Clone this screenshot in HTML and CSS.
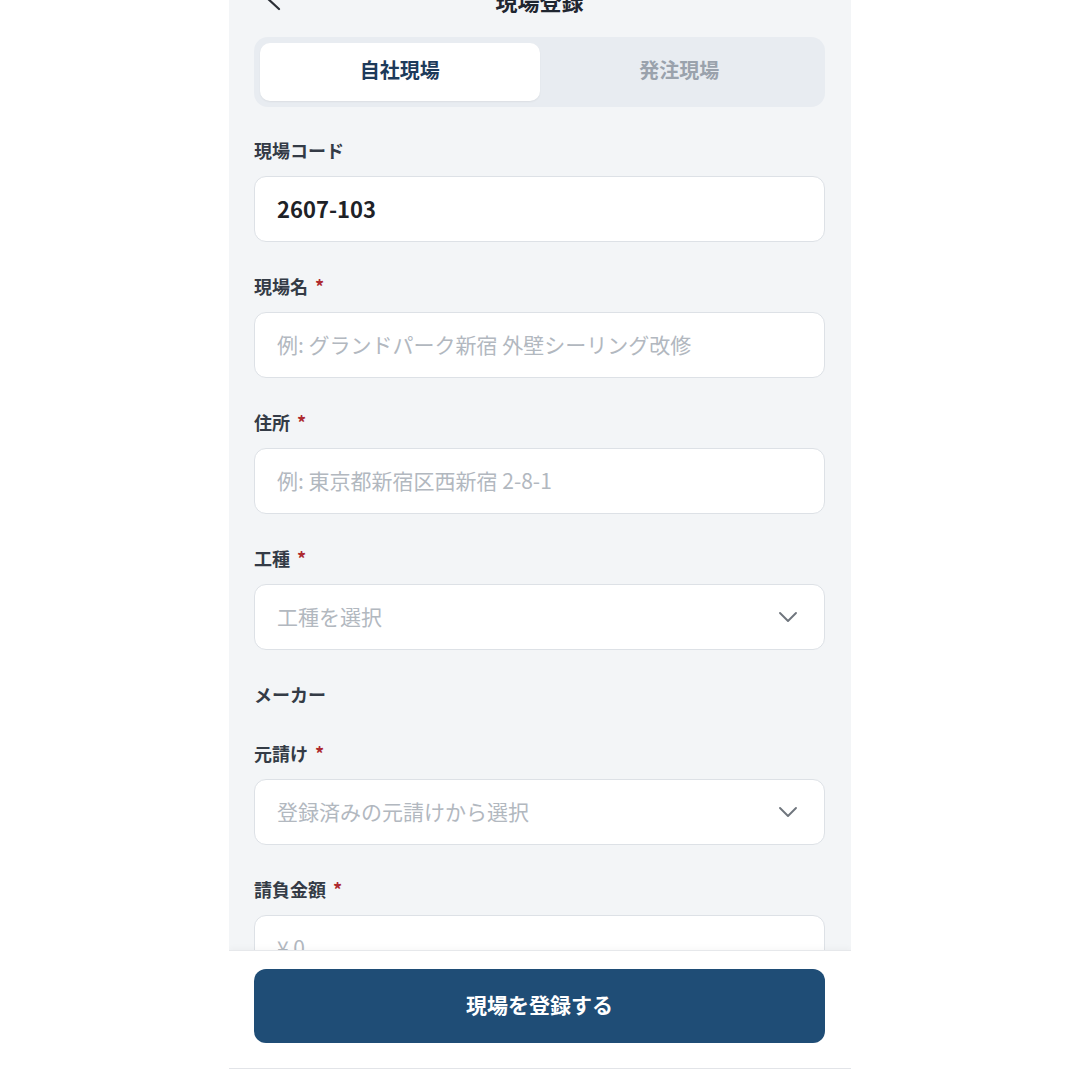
FILE: index.html
```html
<!DOCTYPE html>
<html lang="ja">
<head>
<meta charset="utf-8">
<title>現場登録</title>
<link rel="stylesheet" href="styles.css">
</head>
<body>
<div class="phone">
  <main class="content">
    <header class="header">
      <svg class="back" viewBox="0 0 24 28" width="24" height="28"><polyline points="17,1 4,13 17,25" fill="none" stroke="#2b2f36" stroke-width="2.2" stroke-linecap="round" stroke-linejoin="round"/></svg>
      <h1 class="title">現場登録</h1>
      <span class="spacer"></span>
    </header>

    <div class="segment">
      <div class="tab tab-active">自社現場</div>
      <div class="tab">発注現場</div>
    </div>

    <div class="field">
      <div class="label">現場コード</div>
      <div class="control value">2607-103</div>
    </div>

    <div class="field">
      <div class="label">現場名<span class="req">*</span></div>
      <div class="control placeholder">例: グランドパーク新宿 外壁シーリング改修</div>
    </div>

    <div class="field">
      <div class="label">住所<span class="req">*</span></div>
      <div class="control placeholder">例: 東京都新宿区西新宿 2-8-1</div>
    </div>

    <div class="field">
      <div class="label">工種<span class="req">*</span></div>
      <div class="control placeholder select">
        <span>工種を選択</span>
        <svg class="chev" viewBox="0 0 20 12" width="20" height="12"><polyline points="2,2 10,10 18,2" fill="none" stroke="#6f757d" stroke-width="1.9" stroke-linecap="round" stroke-linejoin="round"/></svg>
      </div>
    </div>

    <div class="field field-empty">
      <div class="label">メーカー</div>
    </div>

    <div class="field">
      <div class="label">元請け<span class="req">*</span></div>
      <div class="control placeholder select">
        <span>登録済みの元請けから選択</span>
        <svg class="chev" viewBox="0 0 20 12" width="20" height="12"><polyline points="2,2 10,10 18,2" fill="none" stroke="#6f757d" stroke-width="1.9" stroke-linecap="round" stroke-linejoin="round"/></svg>
      </div>
    </div>

    <div class="field">
      <div class="label">請負金額<span class="req">*</span></div>
      <div class="control placeholder">¥ 0</div>
    </div>
  </main>

  <footer class="bar">
    <button class="submit">現場を登録する</button>
  </footer>
</div>
</body>
</html>
```

FILE: styles.css
```css
* { box-sizing: border-box; }

html, body {
  margin: 0;
  padding: 0;
  background: #ffffff;
  font-family: "Noto Sans CJK JP", "Noto Sans", sans-serif;
}

.phone {
  width: 622px;
  height: 1069px;
  margin: 0 0 0 229px;
  background: #f3f5f7;
  display: flex;
  flex-direction: column;
  border-bottom: 1px solid #e2e4e8;
  overflow: hidden;
}

.content {
  flex: 1;
  overflow: hidden;
  padding: 0 26px 0 25px;
}

.header {
  display: grid;
  grid-template-columns: 40px 1fr 40px;
  align-items: start;
  height: 22px;
  margin-top: -11px;
  margin-bottom: 26px;
}

.back {
  margin-top: -5px;
  margin-left: 8px;
}

.title {
  margin: 0;
  text-align: center;
  font-size: 22px;
  line-height: 22px;
  font-weight: 700;
  color: #1f2630;
}

.segment {
  display: flex;
  background: #e8ecf1;
  border-radius: 14px;
  padding: 6px;
  height: 70px;
  margin-bottom: 31px;
}

.tab {
  flex: 1;
  display: flex;
  align-items: center;
  justify-content: center;
  border-radius: 10px;
  font-size: 20px;
  font-weight: 700;
  color: #9aa2ac;
  padding-bottom: 5px;
}

.tab-active {
  background: #ffffff;
  color: #1d3a5a;
  box-shadow: 0 1px 2px rgba(0, 0, 0, 0.06);
}

.field {
  margin-bottom: 32px;
}

.field-empty {
  margin-bottom: 35px;
}

.label {
  font-size: 18px;
  line-height: 24px;
  font-weight: 700;
  color: #343b46;
  margin-bottom: 14px;
}

.field-empty .label {
  margin-bottom: 0;
}

.req {
  color: #ad2a2f;
  margin-left: 7px;
}

.control {
  height: 66px;
  background: #ffffff;
  border: 1px solid #dde1e6;
  border-radius: 12px;
  padding: 0 22px 2px;
  display: flex;
  align-items: center;
  font-size: 21px;
}

.value {
  color: #1e2227;
  font-weight: 600;
  font-size: 22px;
}

.placeholder {
  color: #b2b8bf;
  font-weight: 400;
}

.select {
  justify-content: space-between;
  padding-right: 26px;
}

.chev {
  display: block;
  margin-top: 1px;
}

.bar {
  height: 118px;
  flex: none;
  background: #ffffff;
  border-top: 1px solid #e6e8eb;
  box-shadow: 0 -2px 6px rgba(0, 0, 0, 0.03);
  padding: 18px 26px 0 25px;
}

.submit {
  width: 100%;
  height: 74px;
  border: none;
  border-radius: 12px;
  background: #1f4d76;
  color: #ffffff;
  font-family: "Noto Sans CJK JP", "Noto Sans", sans-serif;
  font-size: 21px;
  font-weight: 700;
  padding: 0 0 5px;
}
```
